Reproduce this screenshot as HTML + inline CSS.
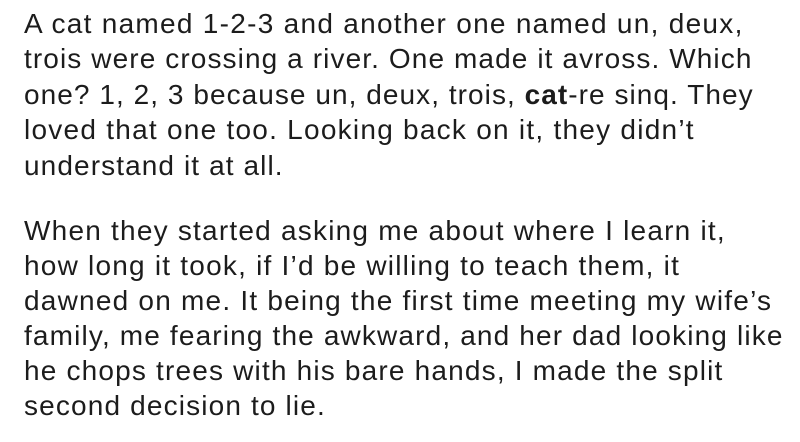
<!DOCTYPE html>
<html><head><style>
body{margin:0;width:800px;height:442px;background:#fff;overflow:hidden}
.l{position:absolute;left:24px;font-family:"Liberation Sans",sans-serif;font-size:28px;letter-spacing:1.22px;color:#1c1c1c;white-space:nowrap;line-height:1}
</style></head><body>
<div class="l" style="top:10px;letter-spacing:1.28px">A cat named 1-2-3 and another one named un, deux,</div>
<div class="l" style="top:45px;letter-spacing:1.1px">trois were crossing a river. One made it avross. Which</div>
<div class="l" style="top:81px;letter-spacing:1.05px">one? 1, 2, 3 because un, deux, trois, <b>cat</b>-re sinq. They</div>
<div class="l" style="top:116px;letter-spacing:1.25px">loved that one too. Looking back on it, they didn’t</div>
<div class="l" style="top:152px;letter-spacing:1.1px">understand it at all.</div>
<div class="l" style="top:217px">When they started asking me about where I learn it,</div>
<div class="l" style="top:252px">how long it took, if I’d be willing to teach them, it</div>
<div class="l" style="top:287px">dawned on me. It being the first time meeting my wife’s</div>
<div class="l" style="top:322px;letter-spacing:1.15px">family, me fearing the awkward, and her dad looking like</div>
<div class="l" style="top:357px;letter-spacing:1.18px">he chops trees with his bare hands, I made the split</div>
<div class="l" style="top:392px;letter-spacing:1.15px">second decision to lie.</div>
</body></html>
